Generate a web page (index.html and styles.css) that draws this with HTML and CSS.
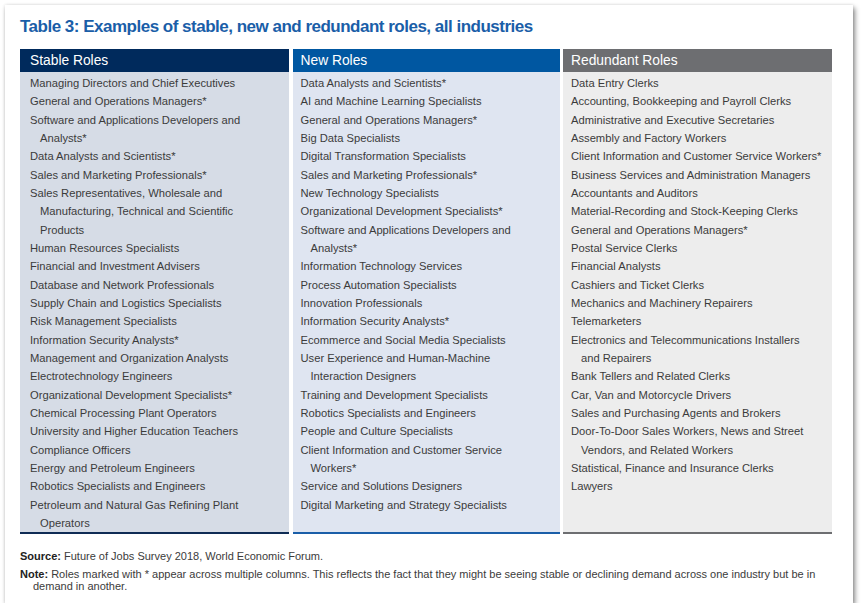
FILE: index.html
```html
<!DOCTYPE html>
<html>
<head>
<meta charset="utf-8">
<link rel="stylesheet" href="styles.css">
</head>
<body>
<div class="card">
  <h1 class="title">Table 3: Examples of stable, new and redundant roles, all industries</h1>
  <div class="table">
    <div class="col col-stable">
      <div class="head">Stable Roles</div>
      <ul class="list">
        <li>Managing Directors and Chief Executives</li>
        <li>General and Operations Managers*</li>
        <li>Software and Applications Developers and<br>Analysts*</li>
        <li>Data Analysts and Scientists*</li>
        <li>Sales and Marketing Professionals*</li>
        <li>Sales Representatives, Wholesale and<br>Manufacturing, Technical and Scientific<br>Products</li>
        <li>Human Resources Specialists</li>
        <li>Financial and Investment Advisers</li>
        <li>Database and Network Professionals</li>
        <li>Supply Chain and Logistics Specialists</li>
        <li>Risk Management Specialists</li>
        <li>Information Security Analysts*</li>
        <li>Management and Organization Analysts</li>
        <li>Electrotechnology Engineers</li>
        <li>Organizational Development Specialists*</li>
        <li>Chemical Processing Plant Operators</li>
        <li>University and Higher Education Teachers</li>
        <li>Compliance Officers</li>
        <li>Energy and Petroleum Engineers</li>
        <li>Robotics Specialists and Engineers</li>
        <li>Petroleum and Natural Gas Refining Plant<br>Operators</li>
      </ul>
    </div>
    <div class="col col-new">
      <div class="head">New Roles</div>
      <ul class="list">
        <li>Data Analysts and Scientists*</li>
        <li>AI and Machine Learning Specialists</li>
        <li>General and Operations Managers*</li>
        <li>Big Data Specialists</li>
        <li>Digital Transformation Specialists</li>
        <li>Sales and Marketing Professionals*</li>
        <li>New Technology Specialists</li>
        <li>Organizational Development Specialists*</li>
        <li>Software and Applications Developers and<br>Analysts*</li>
        <li>Information Technology Services</li>
        <li>Process Automation Specialists</li>
        <li>Innovation Professionals</li>
        <li>Information Security Analysts*</li>
        <li>Ecommerce and Social Media Specialists</li>
        <li>User Experience and Human-Machine<br>Interaction Designers</li>
        <li>Training and Development Specialists</li>
        <li>Robotics Specialists and Engineers</li>
        <li>People and Culture Specialists</li>
        <li>Client Information and Customer Service<br>Workers*</li>
        <li>Service and Solutions Designers</li>
        <li>Digital Marketing and Strategy Specialists</li>
      </ul>
    </div>
    <div class="col col-red">
      <div class="head">Redundant Roles</div>
      <ul class="list">
        <li>Data Entry Clerks</li>
        <li>Accounting, Bookkeeping and Payroll Clerks</li>
        <li>Administrative and Executive Secretaries</li>
        <li>Assembly and Factory Workers</li>
        <li>Client Information and Customer Service Workers*</li>
        <li>Business Services and Administration Managers</li>
        <li>Accountants and Auditors</li>
        <li>Material-Recording and Stock-Keeping Clerks</li>
        <li>General and Operations Managers*</li>
        <li>Postal Service Clerks</li>
        <li>Financial Analysts</li>
        <li>Cashiers and Ticket Clerks</li>
        <li>Mechanics and Machinery Repairers</li>
        <li>Telemarketers</li>
        <li>Electronics and Telecommunications Installers<br>and Repairers</li>
        <li>Bank Tellers and Related Clerks</li>
        <li>Car, Van and Motorcycle Drivers</li>
        <li>Sales and Purchasing Agents and Brokers</li>
        <li>Door-To-Door Sales Workers, News and Street<br>Vendors, and Related Workers</li>
        <li>Statistical, Finance and Insurance Clerks</li>
        <li>Lawyers</li>
      </ul>
    </div>
  </div>
  <div class="notes">
    <p class="note"><b>Source:</b> Future of Jobs Survey 2018, World Economic Forum.</p>
    <p class="note"><b>Note:</b> Roles marked with * appear across multiple columns. This reflects the fact that they might be seeing stable or declining demand across one industry but be in<span class="cont">demand in another.</span></p>
  </div>
</div>
</body>
</html>
```

FILE: styles.css
```css
html, body {
  margin: 0;
  padding: 0;
  background: #ffffff;
}

body {
  font-family: "Liberation Sans", Arial, sans-serif;
  color: #3b3b3b;
}

.card {
  margin: 5px 0 0 5px;
  width: 848px;
  height: 598px;
  box-sizing: border-box;
  background: #ffffff;
  box-shadow: 2px 3px 5px rgba(0, 0, 0, 0.45), 0 0 3px rgba(0, 0, 0, 0.12);
  padding: 12px 21px 0 15px;
}

.title {
  margin: 0;
  font-size: 17px;
  line-height: 20px;
  font-weight: bold;
  color: #1a5ea8;
  letter-spacing: -0.5px;
}

.table {
  margin-top: 12px;
  display: grid;
  grid-template-columns: 269px 267px 269px;
  column-gap: 3.5px;
}

.head {
  height: 23px;
  line-height: 23px;
  padding-left: 10px;
  color: #ffffff;
  font-size: 13.8px;
}

.list {
  list-style: none;
  margin: 0;
  padding: 2px 0 0 0;
  font-size: 11.2px;
  line-height: 18.33px;
}

.list li {
  white-space: nowrap;
  padding-left: 20px;
  text-indent: -10px;
}

.col {
  display: flex;
  flex-direction: column;
  border-bottom: 2px solid;
}

.col-stable { background: #d6dce6; border-color: #0f2c55; }
.col-stable .head { background: #002a5c; }

.col-new { background: #dfe5f1; border-color: #1a5ea8; }
.col-new .head { background: #0057a1; padding-left: 8px; }
.col-new .list li { padding-left: 18px; }

.col-red { background: #ededed; border-color: #6d6e71; }
.col-red .head { background: #6d6e71; padding-left: 8px; }
.col-red .list li { padding-left: 18px; }

.notes {
  margin-top: 16px;
  margin-right: -10px;
  font-size: 11px;
  line-height: 12.5px;
  color: #3b3b3b;
}

.note {
  margin: 0 0 5px 0;
  white-space: nowrap;
}

.note .cont {
  display: block;
  padding-left: 13px;
}

.note b {
  color: #222222;
}
```
